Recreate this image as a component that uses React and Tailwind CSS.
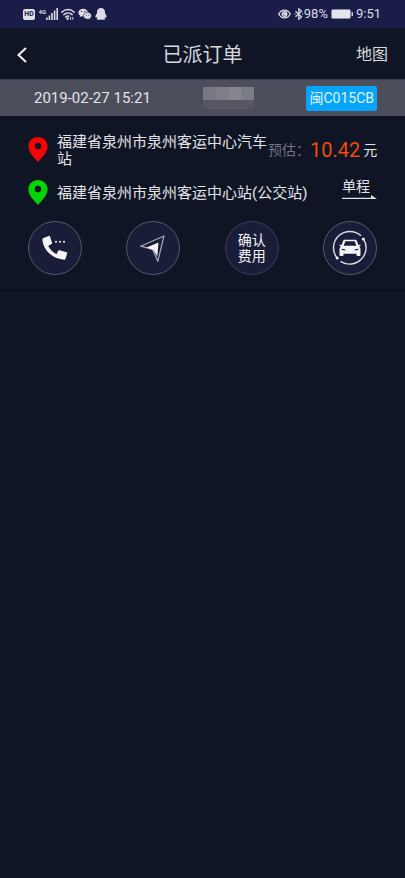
import React from "react";

function StatusBar() {
  return (
    <div className="flex h-7 items-center justify-between bg-[#191d48] pl-[23px] pr-6 text-xs text-[#dcdce6]">
      <div className="flex items-center gap-[3px]">
        <span className="flex h-[11px] w-3 items-center justify-center rounded-[2px] bg-[#e0e0ea] text-[7px] font-bold leading-none text-[#191d48]">
          HD
        </span>
        <div className="flex items-start">
          <span className="w-2 text-right text-[6px] font-bold leading-[7px]">4G</span>
          <svg className="h-3 w-3" viewBox="0 0 12 12" fill="currentColor" aria-hidden="true">
            <rect x="0" y="9.5" width="1.6" height="2.5" />
            <rect x="2.6" y="7.5" width="1.6" height="4.5" />
            <rect x="5.2" y="5" width="1.6" height="7" />
            <rect x="7.8" y="2.5" width="1.6" height="9.5" />
            <rect x="10.4" y="0" width="1.6" height="12" />
          </svg>
        </div>
        <svg className="h-3 w-3.5" viewBox="0 0 14 12" fill="none" stroke="currentColor" strokeWidth="1.5" strokeLinecap="round" aria-hidden="true">
          <path d="M.8 4.2C4.4.6 9.6.6 13.2 4.2" />
          <path d="M2.8 6.6c2.4-2.3 6-2.3 8.4 0" />
          <path d="M4.8 8.9c1-.9 2-1 3-.6" />
          <circle cx="6.6" cy="10.6" r=".6" fill="currentColor" />
          <path d="M9.6 9.4v2M11.8 9.4v2" strokeWidth="1" />
        </svg>
        <svg className="h-3 w-3.5" viewBox="0 0 14 12" aria-hidden="true">
          <path d="M5.2.8C2.5.8.4 2.5.4 4.7c0 1.200.7 2.200 1.700 2.900l-.4 1.500 1.700-.8c.6.2 1.200.3 1.800.3 2.600 0 4.700-1.700 4.700-3.900S7.800.8 5.200.8z" fill="currentColor" />
          <path d="M9.500 4.200c-2.300 0-4.100 1.500-4.100 3.500s1.800 3.500 4.100 3.500c.5 0 1-.1 1.500-.2l1.400.7-.4-1.300c.9-.6 1.500-1.600 1.500-2.700 0-2-1.800-3.500-4-3.500z" fill="currentColor" stroke="#191d48" strokeWidth=".6" />
          <circle cx="3.700" cy="3.500" r=".6" fill="#191d48" />
          <circle cx="6.700" cy="3.300" r=".6" fill="#191d48" />
          <circle cx="8.300" cy="6.900" r=".5" fill="#191d48" />
          <circle cx="10.900" cy="6.900" r=".5" fill="#191d48" />
        </svg>
        <svg className="h-3 w-3" viewBox="0 0 12 12" fill="currentColor" aria-hidden="true">
          <path d="M6 0C3.400 0 2 1.700 2 4v1.200C1 6.400.3 7.800.4 9.200c.1.600.8.300 1.300-.3.200.6.400.9.800 1.300-.5.200-.9.500-.8.900.2.900 2.900.9 4.300.3 1.400.6 4.100.6 4.300-.3.100-.4-.3-.7-.8-.9.400-.4.600-.7.800-1.300.5.600 1.200.9 1.300.3.100-1.400-.6-2.800-1.600-4V4C10 1.700 8.600 0 6 0z" />
        </svg>
      </div>
      <div className="flex items-center font-[Roboto,sans-serif]">
        <svg className="h-3 w-[13px]" viewBox="0 0 13 12" fill="none" stroke="currentColor" strokeWidth="1.300" aria-hidden="true">
          <path d="M.7 6C3.500.8 9.500.8 12.300 6 9.500 11.200 3.500 11.200.7 6z" />
          <circle cx="6.500" cy="6" r="2.300" />
          <circle cx="6.800" cy="5.800" r="1" fill="currentColor" />
        </svg>
        <svg className="ml-[3px] h-3 w-2.5" viewBox="0 0 10 12" fill="none" stroke="currentColor" strokeWidth="1.200" aria-hidden="true">
          <path d="M1.500 3.200l6 5.600L4.800 11.300V.7l2.700 2.500-6 5.600" />
          <path d="M.4 6h1.200M8 6h1.200" />
        </svg>
        <span className="text-[13px]">98%</span>
        <svg className="mx-[3px] h-2.5 w-[22px]" viewBox="0 0 22 10" aria-hidden="true">
          <rect x=".5" y=".5" width="19" height="9" rx="1.500" fill="#e4e4ec" stroke="#8789a3" />
          <rect x="20.500" y="3" width="1.500" height="4" fill="#c5c6d4" />
        </svg>
        <span className="text-[13px]">9:51</span>
      </div>
    </div>
  );
}

function Header() {
  return (
    <header className="grid h-[51px] grid-cols-[1fr_auto_1fr] items-center px-[17px] pt-0.5 text-[#d6d7dc]">
      <button type="button" aria-label="返回" className="flex justify-self-start">
        <svg className="h-4 w-2.5" viewBox="0 0 10 16" fill="none" stroke="#f2f2f5" strokeWidth="2" aria-hidden="true">
          <path d="M9 1L1.500 8 9 15" />
        </svg>
      </button>
      <h1 className="text-xl">已派订单</h1>
      <button type="button" className="justify-self-end text-base">地图</button>
    </header>
  );
}

function MaskedName() {
  return (
    <div className="w-[51px]" aria-hidden="true">
      <div className="flex h-[13px]">
        <span className="flex-1 bg-[#787884]" />
        <span className="flex-1 bg-[#7e7e89]" />
        <span className="flex-1 bg-[#868690]" />
        <span className="flex-1 bg-[#7b7b86]" />
      </div>
      <div className="h-[9px] bg-[#555662]" />
    </div>
  );
}

function Pin({ className }) {
  return (
    <svg className={"h-[25px] w-5 shrink-0 " + className} viewBox="0 0 20 25" fill="currentColor" aria-hidden="true">
      <path fillRule="evenodd" d="M10 0C4.600 0 .4 4.100.4 9.300c0 6 5.600 11.200 9.600 15.700 4-4.500 9.600-9.700 9.600-15.700C19.600 4.100 15.400 0 10 0zm0 5.800a3.200 3.200 0 1 1 0 6.400 3.200 3.200 0 0 1 0-6.400z" />
    </svg>
  );
}

function RoundButton({ label, faint, children }) {
  return (
    <button
      type="button"
      aria-label={label}
      className={
        "flex size-[54px] items-center justify-center rounded-full border bg-[#1a1d38] text-[#f4f4f7] " +
        (faint ? "border-[#3a3d54]" : "border-[#56596c]")
      }
    >
      {children}
    </button>
  );
}

function OrderCard() {
  return (
    <article className="border-b border-[#090c1a] pb-[15px]">
      <div className="flex h-[37px] items-center justify-between border-t border-[#3b3d4b] bg-[#4d4e5b] pl-[34px] pr-7">
        <time className="text-[15px] text-[#e4e4e8]">2019-02-27 15:21</time>
        <MaskedName />
        <span className="flex h-[25px] items-center rounded-[2px] bg-[#04a5fb] px-[3px] text-sm text-[#e2f3fd]">闽C015CB</span>
      </div>

      <div className="flex items-center pl-7 pr-7 pt-[14px] text-[15px] leading-[17px] text-[#e2e2e7]">
        <Pin className="text-[#f60404]" />
        <p className="ml-[9px] w-[211px] shrink-0 pt-1">福建省泉州市泉州客运中心汽车站</p>
        <p className="flex flex-1 items-center justify-end whitespace-nowrap pt-0.5">
          <span className="text-sm text-[#717386]">预估：</span>
          <span className="text-xl leading-6 text-[#ee4c08]">10.42</span>
          <span className="ml-[3px] text-sm">元</span>
        </p>
      </div>

      <div className="flex items-center pl-7 pr-7 pt-[10px] text-[15px] leading-[17px] text-[#e2e2e7]">
        <Pin className="text-[#02d302]" />
        <p className="ml-[9px] whitespace-nowrap pt-0.5">福建省泉州市泉州客运中心站(公交站)</p>
        <div className="ml-auto flex w-[35px] flex-col pb-2">
          <span className="text-sm leading-[17px]">单程</span>
          <svg className="h-1 w-full" viewBox="0 0 35 4" fill="currentColor" aria-hidden="true">
            <path d="M0 2.800h29V0l6 4H0z" />
          </svg>
        </div>
      </div>

      <div className="flex justify-between px-7 pt-[14px]">
        <RoundButton label="电话">
          <svg className="size-[26px]" viewBox="0 0 26 26" fill="currentColor" aria-hidden="true">
            <path d="M.9 3.300L6.800.9c.7-.2 1 .1 1.200.7l2 6.200c.2.700 0 1-.5 1.300l-3.300 1.800c2 3.600 4.600 6.200 8.200 8.300l1.800-3.400c.3-.6.7-.8 1.300-.6l7 2c.7.2.9.6.7 1.200l-1.800 5.600c-.2.600-.6.800-1.200.7C10.800 23.800.9 15.300.4 4.300c0-.5.100-.8.500-1z" />
            <circle cx="14" cy="6.800" r="1" />
            <circle cx="18" cy="6.800" r="1" />
            <circle cx="22" cy="6.800" r="1" />
          </svg>
        </RoundButton>
        <RoundButton label="导航">
          <svg className="h-7 w-[26px]" viewBox="0 0 26 28" aria-hidden="true">
            <path d="M24 2L.6 12.200l12 3.200 5.200 11.800z" fill="none" stroke="#a9aabb" strokeWidth="1.200" strokeLinejoin="round" />
            <path d="M18.500 8.500L6.500 13.600l7 2.300 3.800 6.600z" fill="currentColor" />
          </svg>
        </RoundButton>
        <RoundButton label="确认费用" faint>
          <span className="w-7 text-sm leading-4">确认费用</span>
        </RoundButton>
        <RoundButton label="车辆">
          <svg className="size-9" viewBox="0 0 36 36" aria-hidden="true">
            <g fill="none" stroke="#dcdce4" strokeWidth="1.400">
              <path d="M29 5.800A16.400 16.400 0 0 0 5 28" />
              <path d="M8.500 31.300A16.400 16.400 0 0 0 31.300 8.600" />
            </g>
            <circle cx="5.200" cy="28" r="1.500" fill="#f4f4f7" />
            <circle cx="31.300" cy="9" r="1.500" fill="#f4f4f7" />
            <path fill="#f4f4f7" fillRule="evenodd" d="M13 9.800h10c1 0 1.600.5 2 1.400l1.600 4 1.500-.6c.5 0 .7.8.2 1.200l-1 .8c.8.700 1.200 1.500 1.200 2.500V25c0 .6-.3 1-.9 1h-2.200c-.6 0-.9-.4-.9-1v-1.200h-13V25c0 .6-.3 1-.9 1H8.400c-.6 0-.9-.4-.9-1v-5.900c0-1 .4-1.800 1.200-2.500l-1-.8c-.5-.4-.3-1.200.2-1.200l1.500.6 1.600-4c.4-.9 1-1.400 2-1.400zm.3 1.500l-1.700 4.500h12.800l-1.700-4.500zM9.500 18.700l.5 1.300 3.600.6-.6-1.300zm17 0l-3.500.6-.6 1.300 3.600-.6z" />
          </svg>
        </RoundButton>
      </div>
    </article>
  );
}

export default function App() {
  return (
    <div className="min-h-screen bg-[#101525] font-[Roboto,'Noto_Sans_CJK_SC',sans-serif]">
      <StatusBar />
      <Header />
      <main>
        <OrderCard />
      </main>
    </div>
  );
}
